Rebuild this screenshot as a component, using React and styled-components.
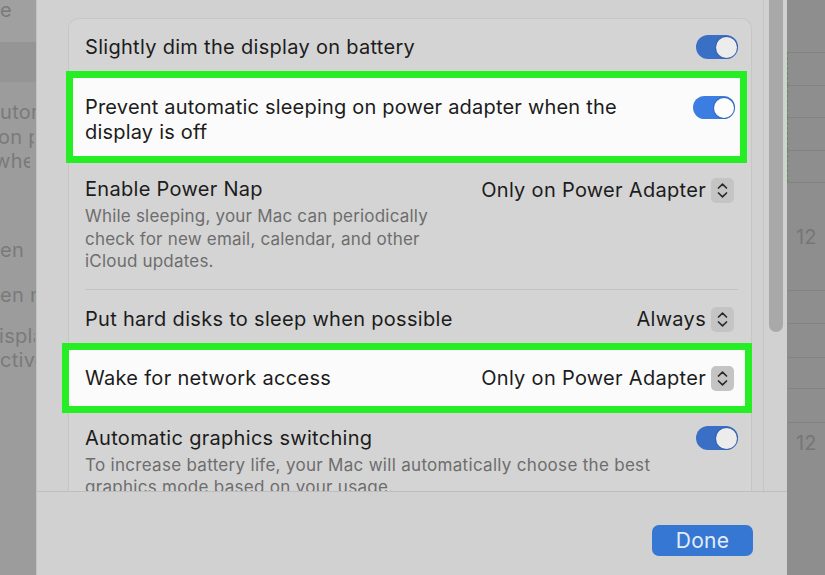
import React from "react";
import styled, { createGlobalStyle } from "styled-components";

const Global = createGlobalStyle`
  html, body { margin: 0; padding: 0; }
  body {
    width: 825px; height: 575px; overflow: hidden;
    font-family: Inter, "Noto Sans", sans-serif;
    -webkit-font-smoothing: antialiased;
  }
  * { box-sizing: border-box; }
`;

const Page = styled.div`
  display: grid;
  grid-template-columns: 36px 751px 38px;
  width: 825px;
  height: 575px;
  overflow: hidden;
`;

const LeftStrip = styled.div`
  background: linear-gradient(to bottom, #a0a0a0 0 42px, #959595 42px 82px, #9c9c9c 82px);
  overflow: hidden;
  display: flex;
  flex-direction: column;
  color: #7a7a7a;
  font-size: 20px;
  line-height: 24px;
  letter-spacing: 0.3px;
  white-space: nowrap;
`;

const StripLine = styled.div`
  margin-top: ${(p) => p.$gap}px;
  margin-left: ${(p) => p.$shift || 0}px;
  width: 36px;
  overflow: hidden;
`;

const RightStrip = styled.div`
  background: #8e8e8e;
  overflow: hidden;
  display: flex;
  flex-direction: column;
  color: #767676;
  font-size: 20px;
`;

const Cell = styled.div`
  height: ${(p) => p.$h}px;
  border-top: ${(p) => (p.$line ? "1px solid #828282" : "none")};
  border-left: ${(p) => (p.$marked ? "1px dashed #4f9a4a" : "1px solid transparent")};
  display: flex;
  align-items: center;
  padding-left: 8px;
`;

const Sheet = styled.div`
  background: #d1d1d1;
  display: flex;
  flex-direction: column;
  border-left: 1px solid #c2c2c2;
`;

const ScrollArea = styled.div`
  display: flex;
  height: 492px;
  border-bottom: 1px solid #bebebe;
`;

const Content = styled.div`
  flex: 1;
  padding: 18px 11px 0 31px;
  overflow: hidden;
`;

const ScrollTrack = styled.div`
  width: 24px;
  border-left: 1px solid #c4c4c4;
  padding: 0 4px 0 5px;
`;

const Thumb = styled.div`
  height: 332px;
  border-radius: 0 0 7px 7px;
  background: #a9a9a9;
`;

const Group = styled.div`
  border: 1px solid #c6c6c6;
  border-bottom: none;
  border-radius: 10px 10px 0 0;
  background: #d4d4d4;
  height: 500px;
`;

const Row = styled.div`
  display: flex;
  justify-content: space-between;
  align-items: ${(p) => p.$align || "center"};
  height: ${(p) => (p.$h ? `${p.$h}px` : "auto")};
  padding: ${(p) => p.$pad || "0 13px 0 16px"};
`;

const HighlightRow = styled.div`
  display: flex;
  justify-content: space-between;
  align-items: ${(p) => p.$align || "center"};
  height: ${(p) => p.$h}px;
  margin: ${(p) => p.$margin};
  padding: ${(p) => p.$pad};
  border: 7px solid #25ee25;
  background: #fbfbfb;
`;

const TextCol = styled.div`
  display: flex;
  flex-direction: column;
`;

const Title = styled.div`
  font-size: 20px;
  line-height: 25px;
  color: #1c1c1c;
  letter-spacing: ${(p) => p.$ls ?? 0.3}px;
  white-space: nowrap;
`;

const Desc = styled.div`
  font-size: 17px;
  line-height: ${(p) => p.$lh || 22.5}px;
  letter-spacing: ${(p) => p.$ls ?? 0.2}px;
  margin-top: ${(p) => p.$mt || 3}px;
  color: #6d6d6d;
`;

const Divider = styled.div`
  height: 1px;
  margin: 0 13px 0 16px;
  background: #c3c3c3;
`;

const ToggleTrack = styled.span`
  display: flex;
  justify-content: flex-end;
  align-items: center;
  width: 42px;
  height: ${(p) => p.$h || 24}px;
  margin-top: ${(p) => p.$mt || 0}px;
  padding: 1px;
  border-radius: 12px;
  background: ${(p) => p.$color || "#3a6fc6"};
  flex-shrink: 0;
`;

const Knob = styled.span`
  width: ${(p) => p.$s}px;
  height: ${(p) => p.$s}px;
  border-radius: 50%;
  background: ${(p) => p.$bg || "#ececec"};
  box-shadow: 0 0 0 1px rgba(40, 70, 140, 0.35);
`;

const Popup = styled.div`
  display: flex;
  align-items: center;
  gap: 5px;
  margin-top: ${(p) => p.$mt || 0}px;
  margin-right: ${(p) => p.$mr || 0}px;
  font-size: 20px;
  line-height: 25px;
  color: #1c1c1c;
  letter-spacing: 0.3px;
`;

const Stepper = styled.span`
  display: flex;
  align-items: center;
  justify-content: center;
  width: 23px;
  height: 25px;
  border-radius: 5px;
  background: #c4c4c4;
`;

const Footer = styled.div`
  flex: 1;
  display: flex;
  justify-content: flex-end;
  align-items: flex-start;
  padding: 33px 34px 0 0;
`;

const DoneButton = styled.button`
  width: 101px;
  height: 31px;
  border: none;
  border-radius: 7px;
  background: #3677d4;
  color: #e4ecf8;
  font-family: Inter, "Noto Sans", sans-serif;
  font-size: 21px;
  letter-spacing: 0.3px;
  padding: 0;
`;

const Toggle = ({ h = 24, mt = 0, color, knobBg }) => (
  <ToggleTrack $h={h} $mt={mt} $color={color}>
    <Knob $s={h - 3} $bg={knobBg} />
  </ToggleTrack>
);

const Chevrons = () => (
  <svg width="13" height="17" viewBox="0 0 13 17" fill="none">
    <path d="M2.5 6 L6.5 2.2 L10.5 6" stroke="#2a2a2a" strokeWidth="1.7" strokeLinecap="round" strokeLinejoin="round" />
    <path d="M2.5 11 L6.5 14.8 L10.5 11" stroke="#2a2a2a" strokeWidth="1.7" strokeLinecap="round" strokeLinejoin="round" />
  </svg>
);

const Select = ({ label, mt, mr }) => (
  <Popup $mt={mt} $mr={mr}>
    {label}
    <Stepper>
      <Chevrons />
    </Stepper>
  </Popup>
);

const leftLines = [
  { t: "e", gap: -2, shift: 0 },
  { t: "utom", gap: 78, shift: 0 },
  { t: "on p", gap: 1, shift: -2 },
  { t: "when", gap: 0, shift: -6 },
  { t: "en", gap: 65, shift: 0 },
  { t: "en n", gap: 21, shift: 0 },
  { t: "ispla", gap: 17, shift: -1 },
  { t: "ctive", gap: 0, shift: 0 },
];

const rightCells = [
  { h: 52 },
  { h: 33, line: true, marked: true },
  { h: 32, line: true, marked: true },
  { h: 33, line: true, marked: true },
  { h: 32, line: true, marked: true },
  { h: 108, line: true, label: "12" },
  { h: 33, line: true },
  { h: 34, line: true },
  { h: 31, line: true },
  { h: 34, line: true },
  { h: 40, line: true, label: "12" },
  { h: 100 },
];

export default function App() {
  return (
    <>
      <Global />
      <Page>
        <LeftStrip>
          {leftLines.map((l, i) => (
            <StripLine key={i} $gap={l.gap} $shift={l.shift}>
              {l.t}
            </StripLine>
          ))}
        </LeftStrip>

        <Sheet>
          <ScrollArea>
            <Content>
              <Group>
                <Row $h={52} $pad="4px 13px 0 16px">
                  <Title>Slightly dim the display on battery</Title>
                  <Toggle />
                </Row>

                <HighlightRow $h={92} $margin="0 4px 0 -3px" $pad="17px 5px 0 12px" $align="flex-start">
                  <TextCol>
                    <Title $ls={0.2}>Prevent automatic sleeping on power adapter when the</Title>
                    <Title $ls={0.2}>display is off</Title>
                  </TextCol>
                  <Toggle h={23} mt={1} color="#3b7de0" knobBg="#fdfdfd" />
                </HighlightRow>

                <Row $pad="14px 13px 16.5px 16px" $align="flex-start">
                  <TextCol>
                    <Title>Enable Power Nap</Title>
                    <Desc>
                      While sleeping, your Mac can periodically
                      <br />
                      check for new email, calendar, and other
                      <br />
                      iCloud updates.
                    </Desc>
                  </TextCol>
                  <Select label="Only on Power Adapter" mt={1} mr={4} />
                </Row>

                <Divider />

                <Row $h={53} $pad="6px 13px 0 16px">
                  <Title>Put hard disks to sleep when possible</Title>
                  <Select label="Always" mr={4} />
                </Row>

                <HighlightRow $h={70} $margin="0 -1px 0 -7px" $pad="0 11px 0 16px">
                  <Title>Wake for network access</Title>
                  <Select label="Only on Power Adapter" />
                </HighlightRow>

                <Row $pad="12.5px 13px 0 16px" $align="flex-start">
                  <TextCol>
                    <Title>Automatic graphics switching</Title>
                    <Desc $mt={3.5} $lh={22} $ls={0.3}>
                      To increase battery life, your Mac will automatically choose the best
                      <br />
                      graphics mode based on your usage.
                    </Desc>
                  </TextCol>
                  <Toggle mt={0.5} />
                </Row>
              </Group>
            </Content>
            <ScrollTrack>
              <Thumb />
            </ScrollTrack>
          </ScrollArea>
          <Footer>
            <DoneButton>Done</DoneButton>
          </Footer>
        </Sheet>

        <RightStrip>
          {rightCells.map((c, i) => (
            <Cell key={i} $h={c.h} $line={c.line} $marked={c.marked}>
              {c.label}
            </Cell>
          ))}
        </RightStrip>
      </Page>
    </>
  );
}
